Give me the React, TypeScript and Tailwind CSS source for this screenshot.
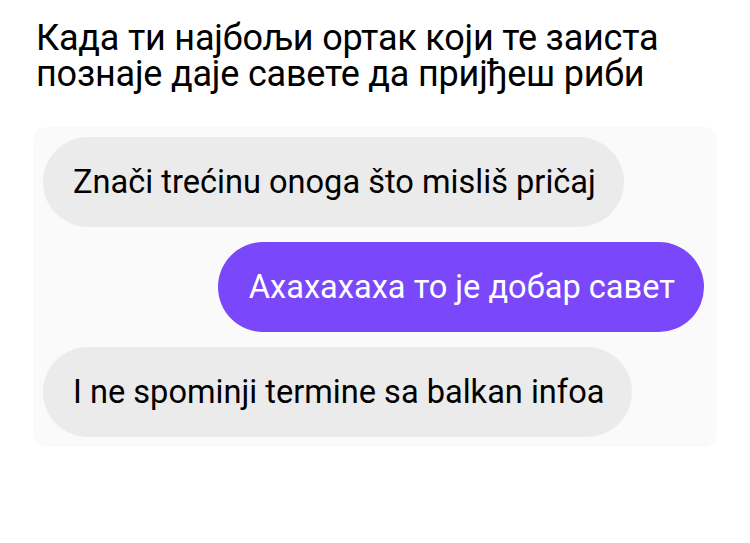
export default function App() {
  return (
    <main className="w-[750px] h-[543px] bg-white font-['Roboto',sans-serif] text-black">
      {/* caption */}
      <div className="pl-[36px] pt-[20px] text-[36px] leading-[36px] tracking-[-0.2px]">
        <p>Када ти најбољи ортак који те заиста</p>
        <p>познаје даје савете да пријђеш риби</p>
      </div>

      {/* chat */}
      <div className="mt-[35px] ml-[33px] w-[684px] rounded-[14px] bg-[#fafafa] pl-[10px] pr-[13px] py-[10px] flex flex-col gap-[15px] text-[32.6px]">
        <div className="self-start h-[90px] rounded-full bg-[#ebebeb] pl-[30px] pr-[28px] flex items-center">
          Znači trećinu onoga što misliš pričaj
        </div>
        <div className="self-end h-[90px] rounded-full bg-[#7a47fa] pl-[31px] pr-[29px] flex items-center text-white">
          Ахахахаха то је добар савет
        </div>
        <div className="self-start h-[90px] rounded-full bg-[#ebebeb] pl-[30px] pr-[28px] flex items-center">
          I ne spominji termine sa balkan infoa
        </div>
      </div>
    </main>
  );
}
